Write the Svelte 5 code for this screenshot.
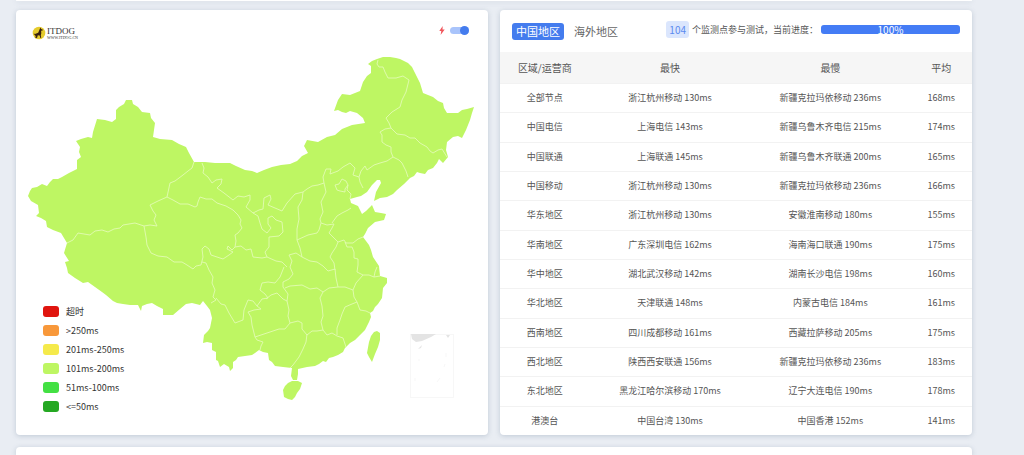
<script lang="ts">
	let region = $state('china');
	let fastMode = $state(true);

	const progress = 100;
	const nodeCount = 104;

	const tabs = [
		{ id: 'china', label: '中国地区' },
		{ id: 'overseas', label: '海外地区' }
	];

	const legend = [
		{ label: '超时', color: '#e0150f' },
		{ label: '>250ms', color: '#f8983a' },
		{ label: '201ms-250ms', color: '#f5ea4b' },
		{ label: '101ms-200ms', color: '#bef663' },
		{ label: '51ms-100ms', color: '#43e043' },
		{ label: '<=50ms', color: '#25a822' }
	];

	const rows = [
		{ area: '全部节点', fast: '浙江杭州移动 130ms', slow: '新疆克拉玛依移动 236ms', avg: 168 },
		{ area: '中国电信', fast: '上海电信 143ms', slow: '新疆乌鲁木齐电信 215ms', avg: 174 },
		{ area: '中国联通', fast: '上海联通 145ms', slow: '新疆乌鲁木齐联通 200ms', avg: 165 },
		{ area: '中国移动', fast: '浙江杭州移动 130ms', slow: '新疆克拉玛依移动 236ms', avg: 166 },
		{ area: '华东地区', fast: '浙江杭州移动 130ms', slow: '安徽淮南移动 180ms', avg: 155 },
		{ area: '华南地区', fast: '广东深圳电信 162ms', slow: '海南海口联通 190ms', avg: 175 },
		{ area: '华中地区', fast: '湖北武汉移动 142ms', slow: '湖南长沙电信 198ms', avg: 160 },
		{ area: '华北地区', fast: '天津联通 148ms', slow: '内蒙古电信 184ms', avg: 161 },
		{ area: '西南地区', fast: '四川成都移动 161ms', slow: '西藏拉萨移动 205ms', avg: 175 },
		{ area: '西北地区', fast: '陕西西安联通 156ms', slow: '新疆克拉玛依移动 236ms', avg: 183 },
		{ area: '东北地区', fast: '黑龙江哈尔滨移动 170ms', slow: '辽宁大连电信 190ms', avg: 178 },
		{ area: '港澳台', fast: '中国台湾 130ms', slow: '中国香港 152ms', avg: 141 }
	];

	const land = [
		// mainland
		'M28 196 30 191 32 188 37 187 42 184 47 186 50 182 53 179 58 179 62 177 69 173 77 169 77 160 81 157 79 152 80 147 76 141 81 139 88 137 92 138 93 132 97 119 105 120 112 122 116 119 116 110 119 107 124 104 126 100 132 100 133 104 138 107 142 112 150 113 151 118 155 123 154 130 153 137 160 139 172 140 179 144 186 147 189 153 194 162 205 162 215 163 230 163 236 166 245 170 252 171 257 173 264 170 272 167 281 165 290 164 297 161 302 156 308 153 304 146 307 140 318 142 327 137 335 135 342 129 352 125 365 123 363 118 357 113 350 111 346 113 342 112 338 110 334 111 338 100 342 94 350 95 355 93 360 91 363 82 367 76 371 73 371 66 368 64 372 61 377 59 383 57 390 57 396 58 400 59 408 63 412 67 415 73 420 83 423 93 428 95 433 97 438 101 443 103 444 108 447 113 458 113 462 110 467 109 474 107 472 113 470 120 466 130 462 138 458 136 453 137 447 142 446 150 448 157 443 163 439 159 437 163 433 168 428 170 425 174 420 173 417 172 414 176 410 178 404 184 397 190 393 194 387 197 380 198 374 201 376 192 381 183 380 180 377 180 372 185 367 192 361 196 357 197 350 199 351 203 358 206 362 214 366 211 369 208 372 205 375 212 381 213 386 214 384 220 375 222 368 228 365 234 363 237 369 245 371 250 373 257 379 266 380 276 387 278 387 283 383 288 382 298 378 304 375 307 373 311 370 313 371 317 369 322 365 330 360 335 355 340 350 343 345 348 343 352 338 355 333 357 329 358 326 362 323 361 319 364 315 366 307 367 298 369 298 374 297 380 293 380 291 376 292 368 283 367 275 366 272 362 269 360 268 353 263 352 259 350 255 353 252 355 245 356 238 357 236 360 233 362 233 368 230 371 229 367 224 364 220 367 218 361 216 360 216 352 212 350 212 343 207 342 203 343 204 335 208 331 210 328 212 318 210 310 207 306 203 301 200 305 196 304 192 303 186 304 180 309 173 315 168 315 163 315 163 309 157 306 152 303 147 304 142 306 141 311 138 305 130 305 123 304 117 303 113 301 106 295 102 292 95 287 88 282 83 283 75 278 68 273 67 268 65 262 69 261 64 253 67 243 61 233 53 230 47 227 46 221 41 218 36 216 39 213 38 205 31 201Z',
		// Hainan
		'M288 383 292 381 298 381 302 383 300 389 297 393 295 397 292 400 288 399 284 397 283 390 285 386Z',
		// Taiwan
		'M374 332 377 331 380 333 380 340 378 347 375 354 372 362 369 357 367 353 369 342 371 336Z'
	];

	const borders = [
		'M67 243 73 240 78 233 84 234 90 235 95 231 102 230 108 232 114 229 120 228 123 225 129 224 135 223 144 226',
		'M144 226 150 225 157 226 154 220 156 215 153 211 150 205 158 201 167 197 170 183 175 181 183 175 188 171 192 168 194 162',
		'M167 197 173 200 180 204 188 204 195 207 197 206 198 202 200 197 206 199 212 199 217 203 226 206 233 210 238 215 241 220 240 224 242 228 238 233 235 235 236 241 235 247 232 250 228 246 227 249 233 252 229 255',
		'M202 163 204 168 203 173 208 177 212 183 216 180 222 179 221 184 217 188 224 193 233 200 238 196 244 197 250 195 250 200 246 207 253 213 259 210 263 209 264 198 270 195 271 199 268 205 275 208 282 211 287 203 295 194 303 192 307 189 312 186 318 185 324 183 323 177 326 169 331 169 330 174 338 171 343 167 350 163 355 168 353 175 359 177 361 171 365 166 367 170 374 165 380 163 387 161 393 157',
		'M253 213 258 216 260 223 262 229 267 233 271 228 268 224 268 218 272 216 276 220 282 222 283 232 279 236 269 237 269 247 265 252 267 257',
		'M393 157 391 152 391 147 386 145 382 142 382 135 380 132 385 129 391 128 397 134 405 135 410 138 415 138 420 143 427 147 430 151 433 153 438 150 442 149 447 157',
		'M391 128 389 123 386 118 392 112 400 107 402 100 406 92 409 80 403 76 396 78 388 78 385 72 383 67 379 67 377 64 378 60',
		'M393 157 399 160 402 163 406 171 408 177',
		'M359 177 360 182 363 188',
		'M335 185 339 184 342 179 346 181 348 185 345 189 345 192 340 191 337 190ZM348 185 347 190 351 194 350 199',
		'M303 192 302 200 298 207 299 219 297 229 297 240 300 248 302 257',
		'M324 183 326 192 321 202 323 212 320 219 321 223 319 230 317 233 308 235 297 240',
		'M321 223 327 225 334 224 332 228 329 233 334 238 338 242 344 240 346 243 353 243 358 239 363 237',
		'M332 223 337 216 342 213 348 210 351 208',
		'M345 242 347 247 352 247 354 252 354 258 358 259 358 265 357 272 363 275 369 275 374 277 380 276',
		'M377 267 375 272 374 277',
		'M338 242 336 247 332 253 330 257 334 263 335 270',
		'M289 255 296 253 302 257 310 261 317 262 323 266 328 271 335 269 336 278 338 287 345 287 353 290 356 283 363 275',
		'M285 288 290 286 302 285 310 289 317 288 323 292 329 288 338 287',
		'M323 292 320 298 322 306 323 316 321 322 323 330',
		'M353 290 354 297 357 302 352 304 345 307 342 314 340 320 337 328 337 335M357 302 360 310 366 311 370 313',
		'M290 323 298 321 302 323 302 329 307 335 312 331 317 331 323 330 327 335 332 333 337 336 343 338 346 347',
		'M307 334 306 342 303 349 299 357 293 365 290 368',
		'M289 255 292 261 290 267 293 274 289 279 283 282 283 287 288 294 287 301 289 310 288 316 290 323',
		'M235 247 241 246 246 250 251 249 253 257 262 258 267 257 276 261 282 262 287 267',
		'M229 255 223 259 217 257 211 255 209 249 205 246 202 249 203 257 201 265 196 266 193 269 187 265 182 262 174 262 167 257 158 256 151 253 147 245 146 237 144 226',
		'M202 262 206 263 209 270 213 277 212 283 215 290 213 297 216 300 211 303',
		'M216 298 221 304 225 305 229 313 235 323 243 320 244 310 248 300 253 301 257 306 262 299 268 298 265 294 260 290 262 283 268 282 275 283 280 277 284 267',
		'M266 299 271 295 277 293 283 299 287 301',
		'M257 306 261 309 254 310 248 312 251 317 252 325 255 337 261 335 270 332 279 329 285 329 290 323',
		'M255 337 257 340 263 342 261 346 260 350'
	];
</script>

<svelte:head>
	<title>ITDOG</title>
</svelte:head>

<main>
	<section class="panel above"></section>

	<div class="columns">
		<section class="panel mapPanel">
			<svg class="map" viewBox="16 10 472 425" role="img" aria-label="中国地图">
				<g class="land">
					{#each land as d}
						<path {d} />
					{/each}
				</g>
				<g class="borders">
					{#each borders as d}
						<path {d} />
					{/each}
				</g>
				<g class="inset">
					<rect x="410.5" y="334.5" width="43" height="63" />
					<path class="coast" d="M411 334h25l-5 3-9 4-6 1-4-3zM446 335l4 0-2 3zM418 349l4-4-1 3z" />
					<path d="M446 353v4M444 367l1-3M437 382l3-4M415 381v-3M419 361v-2" />
				</g>
			</svg>

			<header class="mapHeader">
				<a class="logo" href="/" aria-label="ITDOG">
					<svg width="14" height="14" viewBox="0 0 14 14">
						<circle cx="7" cy="7" r="6.3" fill="#e5cb2d" />
						<path
							d="M8.4 1.5l.7 1.4 1.8.8-.3.9-1.5.2.2 2.5-.5 2 .4 2.7h-.8L7.7 9.4 5.8 9.3 5.1 11.8 3.4 12.3l.3-2.2-.8-.8L1.6 7.5l1.4.6 3.2-1.3z"
							fill="#38200f"
						/>
					</svg>
					<span class="logoText">
						<span class="logoName">ITDOG</span>
						<span class="logoUrl">WWW.ITDOG.CN</span>
					</span>
				</a>
				<label class="fastMode">
					<svg width="6" height="9" viewBox="0 0 6 9">
						<path d="M3.7 0 .3 5h2L1.6 9 5.7 3.6H3.5z" fill="#f0565c" />
					</svg>
					<input type="checkbox" bind:checked={fastMode} aria-label="快速模式" />
				</label>
			</header>

			<ul class="legend">
				{#each legend as { label, color }}
					<li><i style:background={color}></i>{label}</li>
				{/each}
			</ul>
		</section>

		<section class="panel tablePanel">
			<header class="tableHeader">
				<nav class="tabs">
					{#each tabs as { id, label }}
						<button class:active={region === id} onclick={() => (region = id)}>{label}</button>
					{/each}
				</nav>
				<div class="status">
					<span class="count">{nodeCount}</span>
					<span>个监测点参与测试，当前进度：</span>
					<div class="progress" role="progressbar" aria-valuenow={progress} aria-label="当前进度">
						<div class="bar" style:width="{progress}%">{progress}%</div>
					</div>
				</div>
			</header>

			<table>
				<thead>
					<tr>
						<th class="area">区域/运营商</th>
						<th class="node">最快</th>
						<th class="node">最慢</th>
						<th>平均</th>
					</tr>
				</thead>
				<tbody>
					{#each rows as { area, fast, slow, avg }}
						<tr>
							<td>{area}</td>
							<td>{fast}</td>
							<td>{slow}</td>
							<td>{avg}ms</td>
						</tr>
					{/each}
				</tbody>
			</table>
		</section>
	</div>

	<section class="panel below"></section>
</main>

<style>
	:global(body) {
		background: #e9edf3;
		color: #555;
		font-family: 'Noto Sans CJK SC', sans-serif;
		font-size: 9px;
		line-height: 13px;
	}

	main {
		padding: 0 52px 0 16px;
		display: flex;
		flex-direction: column;
	}

	.panel {
		background: #fff;
		border-radius: 4px;
		box-shadow: 0 1px 5px rgba(100, 120, 145, 0.3);
	}

	.above {
		height: 1px;
		margin-bottom: 9px;
	}

	.below {
		height: 8px;
		margin-top: 12px;
		border-radius: 4px 4px 0 0;
	}

	.columns {
		display: grid;
		grid-template-columns: 1fr 1fr;
		gap: 12px;
	}

	/* map, header and legend share one cell */
	.mapPanel {
		display: grid;
		grid-template-columns: 1fr;
	}

	.mapPanel > * {
		grid-area: 1 / 1;
	}

	.map {
		display: block;
		width: 100%;
	}

	.land path {
		fill: #bef663;
	}

	.borders path {
		fill: none;
		stroke: #e2fbb3;
		stroke-width: 0.9;
		stroke-linejoin: round;
	}

	.inset rect,
	.inset path {
		fill: none;
		stroke: #f5f5f5;
		stroke-width: 0.8;
	}

	.inset .coast {
		fill: #e4e4e4;
		stroke: none;
	}

	.mapHeader {
		align-self: start;
		display: flex;
		justify-content: space-between;
		align-items: center;
		padding: 16px 19px 0 16px;
	}

	.logo {
		display: flex;
		align-items: center;
		gap: 1px;
		color: #333;
		text-decoration: none;
	}

	.logoText {
		display: flex;
		flex-direction: column;
		font-family: 'Liberation Serif', serif;
	}

	.logoName {
		font-size: 9px;
		line-height: 9px;
	}

	.logoUrl {
		font-size: 4px;
		line-height: 4px;
	}

	.fastMode {
		display: flex;
		align-items: center;
		gap: 5px;
		padding-bottom: 5px;
	}

	.fastMode input {
		-webkit-appearance: none;
		appearance: none;
		display: flex;
		align-items: center;
		width: 19px;
		height: 7px;
		margin: 0;
		border-radius: 4px;
		background: #ccc;
	}

	.fastMode input::before {
		content: '';
		width: 9px;
		height: 9px;
		flex: none;
		border-radius: 50%;
		background: #999;
	}

	.fastMode input:checked {
		background: #a9c4fb;
		justify-content: flex-end;
	}

	.fastMode input:checked::before {
		background: #447cee;
	}

	.legend {
		align-self: end;
		justify-self: start;
		display: flex;
		flex-direction: column;
		gap: 6px;
		list-style: none;
		margin: 0;
		padding: 0 0 22px 27px;
		color: #333;
	}

	.legend li {
		display: flex;
		align-items: center;
		gap: 7px;
	}

	.legend i {
		width: 16px;
		height: 11px;
		border-radius: 3px;
	}

	.tablePanel {
		display: flex;
		flex-direction: column;
		overflow: hidden;
	}

	.tableHeader {
		display: flex;
		align-items: center;
		justify-content: space-between;
		height: 42px;
		padding: 0 12px;
		box-sizing: border-box;
	}

	.tabs {
		display: flex;
		gap: 6px;
	}

	.tabs button {
		border: none;
		border-radius: 3px;
		background: none;
		color: #666;
		font: inherit;
		font-size: 11px;
		line-height: 17px;
		padding: 0 4px;
		cursor: pointer;
	}

	.tabs button.active {
		background: #447cee;
		color: #fff;
	}

	.status {
		display: flex;
		align-items: center;
		gap: 3px;
		padding-bottom: 3px;
		white-space: nowrap;
	}

	.count {
		padding: 2px 3px;
		border-radius: 3px;
		background: #dbe6fd;
		color: #5b8bf0;
		font-size: 10px;
	}

	.progress {
		width: 139px;
		border-radius: 3px;
		background: #e9edf3;
	}

	.bar {
		height: 9px;
		font-size: 10px;
		line-height: 9px;
		border-radius: 3px;
		background: #447cf5;
		color: #fff;
		text-align: center;
	}

	table {
		flex: 1;
		width: 100%;
		border-collapse: collapse;
		table-layout: fixed;
		text-align: center;
	}

	th {
		height: 31px;
		padding: 0;
		background: #f6f6f6;
		font-size: 10px;
		font-weight: normal;
	}

	th.area {
		width: 19%;
	}

	th.node {
		width: 34%;
	}

	td {
		padding: 7px 0 8px;
		border-top: 1px solid #f2f2f2;
	}
</style>
